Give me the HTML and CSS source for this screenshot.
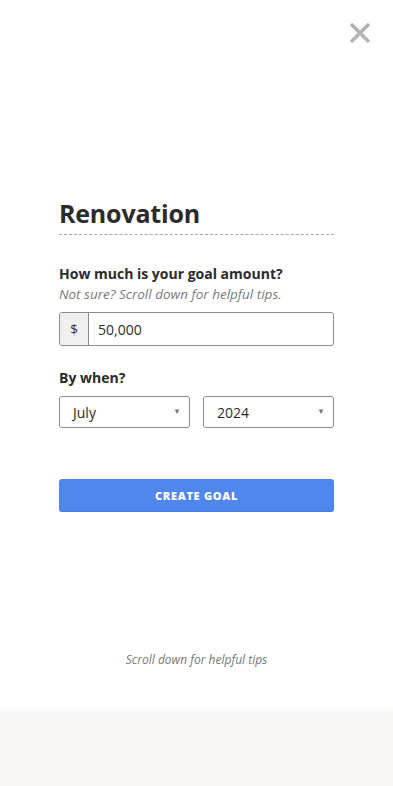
FILE: index.html
```html
<!DOCTYPE html>
<html>
<head>
<meta charset="utf-8">
<link rel="stylesheet" href="styles.css">
</head>
<body>
<div class="page">
  <div class="topbar">
    <button class="close" aria-label="Close">
      <svg width="22" height="22" viewBox="0 0 22 22"><path d="M2 2 L20 20 M20 2 L2 20" stroke="#b3b3b3" stroke-width="3.6" stroke-linecap="butt"/></svg>
    </button>
  </div>
  <main class="form">
    <h1 class="title">Renovation</h1>
    <div class="field">
      <div class="label">How much is your goal amount?</div>
      <div class="hint">Not sure? Scroll down for helpful tips.</div>
      <div class="amount">
        <span class="prefix">$</span>
        <span class="value">50,000</span>
      </div>
    </div>
    <div class="field when">
      <div class="label">By when?</div>
      <div class="selects">
        <div class="select"><span>July</span><span class="caret">▼</span></div>
        <div class="select"><span>2024</span><span class="caret">▼</span></div>
      </div>
    </div>
    <button class="create">CREATE GOAL</button>
    <p class="tips">Scroll down for helpful tips</p>
  </main>
  <div class="footer"></div>
</div>
</body>
</html>
```
FILE: styles.css
```css
html, body {
  margin: 0;
  padding: 0;
  background: #fff;
}
body {
  font-family: "Open Sans", "Liberation Sans", sans-serif;
  color: #2b2b2b;
}
.page {
  width: 393px;
  min-height: 786px;
  display: flex;
  flex-direction: column;
}
.topbar {
  display: flex;
  justify-content: flex-end;
  padding: 22px 22px 0 0;
  height: 22px;
}
.close {
  border: 0;
  background: none;
  padding: 0;
  width: 22px;
  height: 22px;
  display: block;
}
.close svg { display: block; }
.form {
  padding: 0 59px;
  margin-top: 152px;
  display: flex;
  flex-direction: column;
}
.title {
  margin: 0;
  font-size: 25px;
  font-weight: 700;
  line-height: 34px;
  padding-bottom: 4px;
  border-bottom: 1px dashed #a8a8a8;
  color: #2b2b2b;
  letter-spacing: -0.2px;
}
.field { margin-top: 29px; }
.label {
  font-size: 14px;
  font-weight: 700;
  line-height: 20px;
  color: #2b2b2b;
}
.hint {
  font-size: 13.5px;
  font-style: italic;
  color: #7a7a7a;
  line-height: 20px;
}
.amount {
  margin-top: 8px;
  display: flex;
  height: 34px;
  border: 1px solid #8c8c8c;
  border-radius: 3px;
  box-sizing: border-box;
  overflow: hidden;
}
.prefix {
  width: 28px;
  background: #efefef;
  border-right: 1px solid #8c8c8c;
  display: flex;
  align-items: center;
  justify-content: center;
  font-size: 13.5px;
  color: #333;
}
.value {
  display: flex;
  align-items: center;
  padding-left: 9px;
  font-size: 14px;
  color: #2b2b2b;
}
.when { margin-top: 22px; }
.selects {
  margin-top: 8px;
  display: grid;
  grid-template-columns: 1fr 1fr;
  gap: 13px;
}
.select {
  height: 32px;
  box-sizing: border-box;
  border: 1px solid #8c8c8c;
  border-radius: 3px;
  display: flex;
  align-items: center;
  justify-content: space-between;
  padding: 0 8px 0 13px;
  font-size: 14px;
  color: #2b2b2b;
}
.caret {
  font-size: 8px;
  color: #777;
  margin-top: -4px;
}
.create {
  margin-top: 51px;
  height: 33px;
  border: 0;
  border-radius: 3px;
  background: #4f87ed;
  color: #fff;
  font-family: inherit;
  font-size: 11px;
  font-weight: 800;
  letter-spacing: 0.7px;
  box-shadow: inset 0 -1px 0 rgba(0,0,0,0.08);
}
.tips {
  margin: 140px 0 0;
  text-align: center;
  font-size: 12px;
  font-style: italic;
  color: #777;
  line-height: 16px;
}
.footer {
  margin-top: 35px;
  flex: 1;
  background: linear-gradient(#fff 0, #f8f7f4 12px, #f8f7f4 100%);
}
```
